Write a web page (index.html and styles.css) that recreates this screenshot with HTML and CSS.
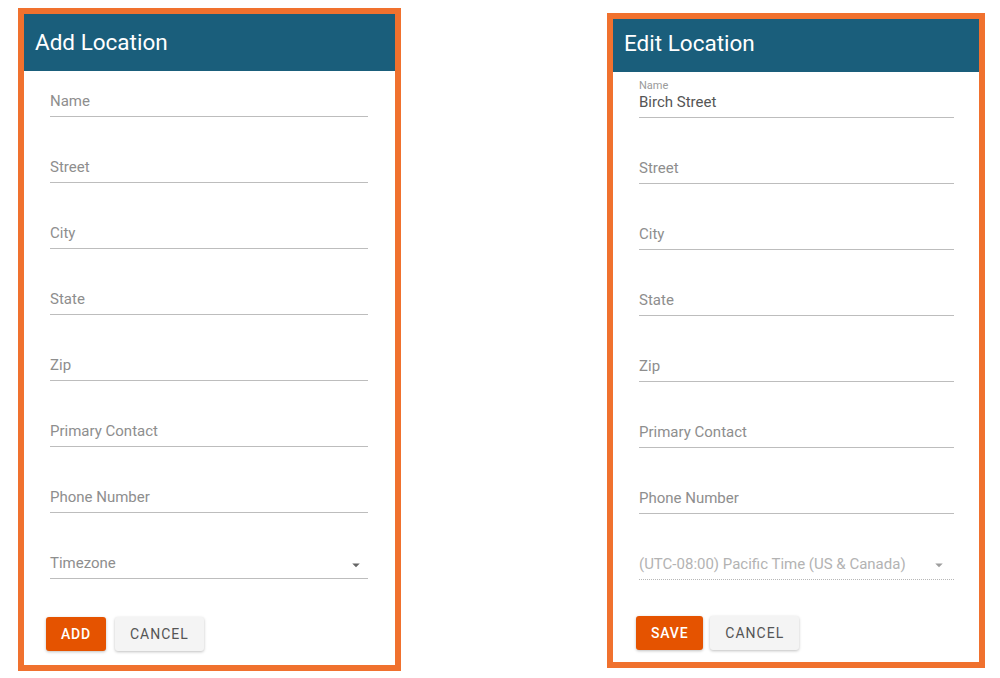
FILE: index.html
```html
<!DOCTYPE html>
<html lang="en">
<head>
    <meta charset="UTF-8">
    <meta name="viewport" content="width=device-width, initial-scale=1.0">
    <title>Locations</title>
    <link rel="stylesheet" href="styles.css">
</head>
<body>
    <div class="card card-add">
        <div class="card-header">Add Location</div>
        <form class="card-body">
            <div class="fields">
                <div class="field"><span class="placeholder">Name</span></div>
                <div class="field"><span class="placeholder">Street</span></div>
                <div class="field"><span class="placeholder">City</span></div>
                <div class="field"><span class="placeholder">State</span></div>
                <div class="field"><span class="placeholder">Zip</span></div>
                <div class="field"><span class="placeholder">Primary Contact</span></div>
                <div class="field"><span class="placeholder">Phone Number</span></div>
                <div class="field select">
                    <span class="placeholder">Timezone</span>
                    <svg class="caret" viewBox="0 0 24 24" width="18" height="18"><path d="M7 10l5 5 5-5z"/></svg>
                </div>
            </div>
            <div class="actions">
                <button type="button" class="btn btn-primary">Add</button>
                <button type="button" class="btn">Cancel</button>
            </div>
        </form>
    </div>

    <div class="card card-edit">
        <div class="card-header">Edit Location</div>
        <form class="card-body">
            <div class="fields">
                <div class="field filled">
                    <span class="small-label">Name</span>
                    <span class="value">Birch Street</span>
                </div>
                <div class="field"><span class="placeholder">Street</span></div>
                <div class="field"><span class="placeholder">City</span></div>
                <div class="field"><span class="placeholder">State</span></div>
                <div class="field"><span class="placeholder">Zip</span></div>
                <div class="field"><span class="placeholder">Primary Contact</span></div>
                <div class="field"><span class="placeholder">Phone Number</span></div>
                <div class="field select disabled">
                    <span class="placeholder">(UTC-08:00) Pacific Time (US &amp; Canada)</span>
                    <svg class="caret" viewBox="0 0 24 24" width="18" height="18"><path d="M7 10l5 5 5-5z"/></svg>
                </div>
            </div>
            <div class="actions">
                <button type="button" class="btn btn-primary">Save</button>
                <button type="button" class="btn">Cancel</button>
            </div>
        </form>
    </div>
</body>
</html>
```

FILE: styles.css
```css
body {
    margin: 0;
    padding: 8px 15px 0 18px;
    display: flex;
    justify-content: space-between;
    align-items: flex-start;
    background-color: white;
    font-family: Roboto, "Liberation Sans", Arial, sans-serif;
}
.card {
    box-sizing: border-box;
    border: 6px solid #f0712e;
    background-color: white;
}
.card-add {
    width: 383px;
    height: 663px;
}
.card-edit {
    width: 378px;
    height: 655px;
    margin-top: 5px;
}
.card-header {
    display: flex;
    align-items: center;
    height: 57px;
    padding-left: 11px;
    padding-bottom: 2px;
    box-sizing: border-box;
    background-color: #1a5e7b;
    color: white;
    font-size: 22.5px;
    font-weight: 400;
}
.card-edit .card-header {
    height: 53px;
    padding-bottom: 5px;
}
.card-body {
    padding: 0 27px 0 26px;
}
.card-edit .card-body {
    padding: 0 25px 0 26px;
}
.fields {
    display: flex;
    flex-direction: column;
    gap: 20px;
}
.field {
    box-sizing: border-box;
    height: 46px;
    display: flex;
    align-items: flex-end;
    padding-bottom: 5px;
    border-bottom: 1px solid #bdbdbd;
    font-size: 15px;
    line-height: 20px;
}
.placeholder {
    color: #8e8e8e;
}
.filled {
    flex-direction: column;
    align-items: flex-start;
    justify-content: flex-end;
}
.small-label {
    font-size: 11px;
    line-height: 13px;
    color: #9a9a9a;
}
.value {
    color: #555;
}
.select {
    justify-content: space-between;
}
.caret {
    fill: #666;
    margin: 0 3px 0 0;
    position: relative;
    top: 1px;
}
.disabled {
    border-bottom: 1px dotted #b8b8b8;
}
.disabled .placeholder {
    color: #b3b3b3;
}
.disabled .caret {
    fill: #9e9e9e;
    margin-right: 6px;
    top: 0;
}
.actions {
    display: flex;
    gap: 9px;
    margin: 38px 0 0 -4px;
}
.card-edit .actions {
    margin: 36px 0 0 -3px;
    gap: 7px;
}
.btn {
    height: 34px;
    padding: 0 15px;
    border: none;
    border-radius: 3px;
    background-color: #f4f4f4;
    color: #555;
    font-family: inherit;
    font-size: 14px;
    font-weight: 400;
    letter-spacing: 1px;
    text-transform: uppercase;
    box-shadow: 0 1px 3px rgba(0,0,0,0.25);
    cursor: pointer;
}
.btn-primary {
    background-color: #e55300;
    color: white;
    font-weight: 500;
    letter-spacing: 0.8px;
}
```
